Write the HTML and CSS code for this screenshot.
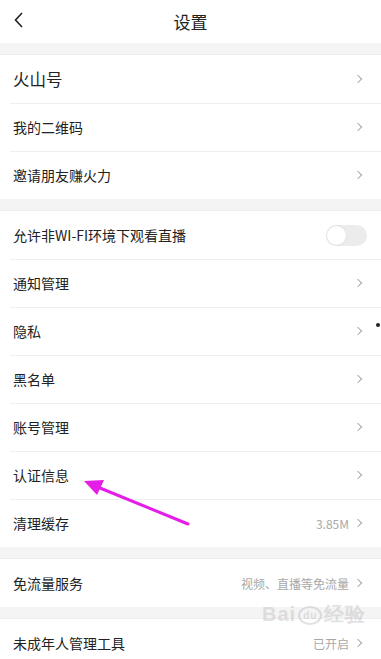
FILE: index.html
```
<!DOCTYPE html>
<html lang="zh">
<head>
<meta charset="utf-8">
<link rel="stylesheet" href="styles.css">
</head>
<body>
<div class="page">
  <header class="top">
    <svg class="back" width="12" height="18" viewBox="0 0 12 18"><path d="M9 2 L2.5 9 L9 16" fill="none" stroke="#222" stroke-width="1.6"/></svg>
    <div class="title">设置</div>
  </header>
  <div class="gap"></div>
  <section class="group">
    <div class="row"><span class="label big">火山号</span><span class="chev"></span></div>
    <div class="row"><span class="label">我的二维码</span><span class="chev"></span></div>
    <div class="row"><span class="label">邀请朋友赚火力</span><span class="chev"></span></div>
  </section>
  <div class="gap"></div>
  <section class="group">
    <div class="row"><span class="label">允许非WI-FI环境下观看直播</span><span class="toggle"><span class="knob"></span></span></div>
    <div class="row"><span class="label">通知管理</span><span class="chev"></span></div>
    <div class="row"><span class="label">隐私</span><span class="chev"></span></div>
    <div class="row"><span class="label">黑名单</span><span class="chev"></span></div>
    <div class="row"><span class="label">账号管理</span><span class="chev"></span></div>
    <div class="row"><span class="label">认证信息</span><span class="chev"></span></div>
    <div class="row"><span class="label">清理缓存</span><span class="value">3.85M</span><span class="chev"></span></div>
  </section>
  <div class="gap"></div>
  <section class="group">
    <div class="row"><span class="label">免流量服务</span><span class="value">视频、直播等免流量</span><span class="chev"></span></div>
  </section>
  <div class="gap"></div>
  <section class="group">
    <div class="row"><span class="label">未成年人管理工具</span><span class="value">已开启</span><span class="chev"></span></div>
  </section>
  <svg class="arrow" width="381" height="659" viewBox="0 0 381 659">
    <line x1="188" y1="524" x2="100" y2="488" stroke="#e41ee6" stroke-width="3" stroke-linecap="round"/>
    <polygon points="84,481 104,480 97,495" fill="#e41ee6"/>
  </svg>
  <span class="dot"></span>
  <div class="wm"><span class="wm1">Bai<span class="paw">du</span>经验</span></div>
</div>
</body>
</html>
```
FILE: styles.css
```
* { box-sizing: border-box; }
html, body { margin: 0; padding: 0; }
body {
  width: 381px;
  height: 659px;
  overflow: hidden;
  background: #f4f4f4;
  font-family: "Noto Sans CJK SC", "Noto Sans", sans-serif;
  color: #222;
}
.page { position: relative; width: 381px; height: 659px; overflow: hidden; }
.top {
  height: 43px;
  background: #fff;
  display: flex;
  align-items: center;
  justify-content: center;
  position: relative;
}
.back { position: absolute; left: 13px; top: 11px; }
.title { font-size: 17px; color: #222; }
.gap { height: 12px; background: #f4f4f4; border-bottom: 1px solid #ededed; }
.group { background: #fff; }
.row {
  height: 48px;
  display: flex;
  align-items: center;
  padding: 0 16px 0 13px;
  position: relative;
}
.row + .row::before {
  content: "";
  position: absolute;
  left: 10px;
  right: 0;
  top: 0;
  height: 1px;
  background: #efefef;
}
.label { flex: 1; font-size: 14px; color: #222; white-space: nowrap; }
.label.big { font-size: 16.5px; }
.value { font-size: 12px; color: #a8a8a8; margin-right: 6px; white-space: nowrap; }
.chev {
  width: 6px; height: 6px;
  border-top: 1px solid #aaa;
  border-right: 1px solid #aaa;
  transform: rotate(45deg);
  margin-right: 4px;
}
.toggle {
  width: 41px; height: 21px;
  border-radius: 11px;
  background: #ececec;
  display: flex;
  align-items: center;
  padding-left: 1px;
  margin-right: -2px;
}
.knob {
  width: 19px; height: 19px; border-radius: 50%;
  background: #fff;
  box-shadow: 0 0 2px rgba(0,0,0,0.12);
}
.arrow { position: absolute; left: 0; top: 0; pointer-events: none; }
.dot { position: absolute; left: 376px; top: 323px; width: 4px; height: 4px; background: #222; border-radius: 50%; }
.wm {
  position: absolute; left: 262px; top: 604px;
  color: rgba(180,180,180,0.4);
  font-family: "Liberation Sans", sans-serif;
  line-height: 1;
}
.wm1 { font-size: 20px; font-weight: bold; letter-spacing: 1px; }
.paw { font-size: 10px; border: 2px solid rgba(180,180,180,0.4); border-radius: 50%; padding: 2px 3px; margin: 0 2px; vertical-align: middle; }
```
